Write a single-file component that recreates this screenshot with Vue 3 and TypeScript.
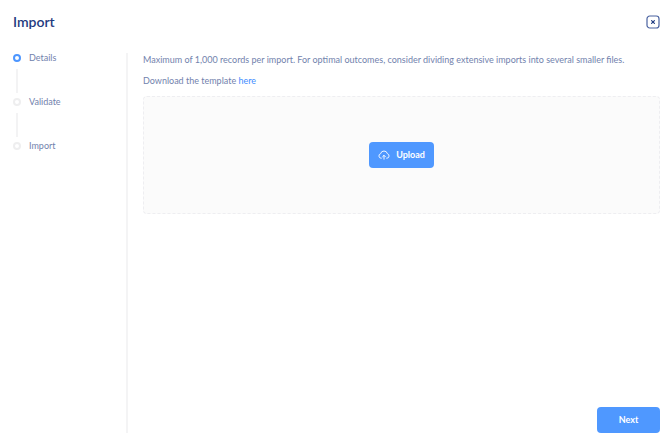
<script setup lang="ts">
import { ref } from 'vue'

interface Step {
  id: number
  label: string
}

const steps: Step[] = [
  { id: 1, label: 'Details' },
  { id: 2, label: 'Validate' },
  { id: 3, label: 'Import' },
]

const current = ref(1)

function next(): void {
  current.value = Math.min(current.value + 1, steps.length)
}
</script>

<template>
  <div class="page">
    <header class="header">
      <h1 class="title">Import</h1>
      <button class="close" type="button" aria-label="Close">
        <svg viewBox="0 0 14 14" width="14" height="14" fill="none" aria-hidden="true">
          <rect x="1" y="1" width="12" height="12" rx="2.8" stroke="#4a62a0" stroke-width="1.2" />
          <path d="M5.6 5.6l2.8 2.8M8.4 5.6L5.6 8.4" stroke="#1f3b80" stroke-width="1.2" stroke-linecap="round" />
        </svg>
      </button>
    </header>

    <div class="body">
      <ol class="steps">
        <li v-for="step in steps" :key="step.id" class="step" :class="{ active: step.id === current }">
          <span class="dot"></span>
          <span class="label">{{ step.label }}</span>
        </li>
      </ol>

      <main class="content">
        <p class="text">
          Maximum of 1,000 records per import. For optimal outcomes, consider dividing extensive imports into several smaller files.
        </p>
        <p class="text">Download the template <a class="link" href="#template">here</a></p>

        <section class="dropzone">
          <button class="button upload" type="button">
            <svg viewBox="0 0 12 10" width="12" height="10" fill="none" stroke="#fff" stroke-width="0.9" stroke-linecap="round" stroke-linejoin="round" aria-hidden="true">
              <path d="M3.3 8.2H3A2.3 2.3 0 0 1 2.6 3.7 3.5 3.5 0 0 1 9.4 3.7 2.3 2.3 0 0 1 9 8.2H8.7" />
              <path d="M6 9.2V5.4M4.6 6.7L6 5.3l1.4 1.4" />
            </svg>
            <span>Upload</span>
          </button>
        </section>

        <footer class="footer">
          <button class="button next" type="button" @click="next">Next</button>
        </footer>
      </main>
    </div>
  </div>
</template>

<style>
body {
  margin: 0;
  background: #fff;
}
</style>

<style scoped>
.page {
  box-sizing: border-box;
  display: flex;
  flex-direction: column;
  min-height: 100vh;
  padding: 14px 10px 14px 13px;
  color: #7282ad;
  font-family: Lato, "Liberation Sans", sans-serif;
  font-size: 9px;
  line-height: 12px;
}

.header {
  display: flex;
  align-items: center;
  justify-content: space-between;
  height: 16px;
  margin-bottom: 23px;
}

.title {
  margin: 0;
  color: #1f3b80;
  font-size: 14px;
  font-weight: 600;
  line-height: 16px;
}

.close {
  display: flex;
  padding: 0;
  border: 0;
  background: none;
  cursor: pointer;
}

.body {
  display: flex;
  flex: 1;
}

.steps {
  box-sizing: border-box;
  flex: none;
  width: 115px;
  margin: 0;
  padding: 0;
  border-right: 2px solid #f4f4f5;
  line-height: 10px;
  list-style: none;
}

.step {
  display: grid;
  grid-template-columns: 8px 1fr;
  column-gap: 8px;
  align-items: center;
  padding-bottom: 4px;
}

.step:not(:last-child)::after {
  content: "";
  justify-self: center;
  width: 2px;
  height: 24px;
  margin-top: 6px;
  background: #f3f3f4;
}

.dot {
  box-sizing: border-box;
  width: 8px;
  height: 8px;
  border: 2px solid #eeeeef;
  border-radius: 50%;
}

.active .dot {
  border-color: #4d96ff;
}

.content {
  display: flex;
  flex: 1;
  flex-direction: column;
  min-width: 0;
  padding: 1px 0 0 15px;
}

.text {
  margin: 0 0 9px;
}

.link {
  color: #3f8cff;
  text-decoration: none;
}

.dropzone {
  box-sizing: border-box;
  display: flex;
  align-items: center;
  justify-content: center;
  min-height: 118px;
  border: 1px dashed #eeeef1;
  border-radius: 4px;
  background: #fbfbfb;
}

.button {
  display: flex;
  align-items: center;
  justify-content: center;
  height: 26px;
  padding: 0 9px;
  border: 0;
  border-radius: 4px;
  background: #4f98ff;
  color: #fff;
  font: inherit;
  font-weight: 700;
  cursor: pointer;
}

.upload {
  gap: 6px;
}

.next {
  min-width: 63px;
}

.footer {
  display: flex;
  justify-content: flex-end;
  margin-top: auto;
}
</style>
